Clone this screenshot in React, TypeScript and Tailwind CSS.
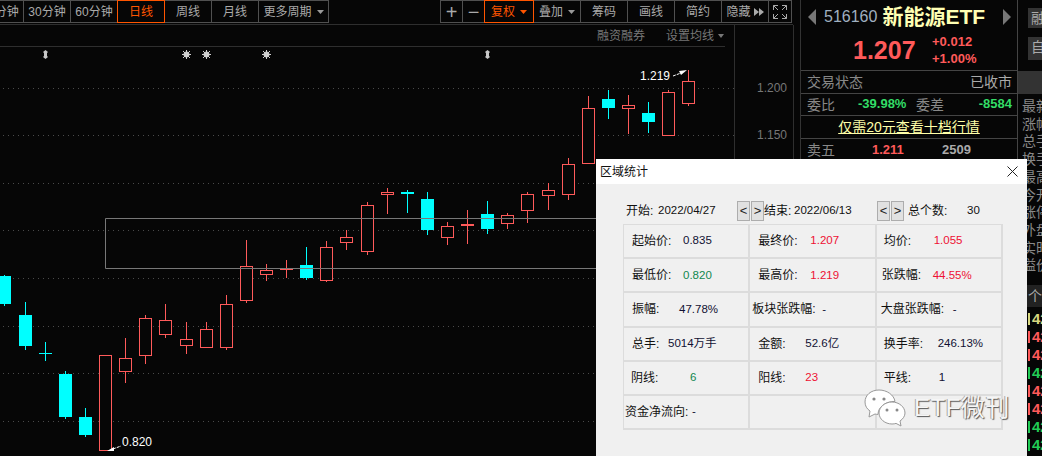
const RED = "#ff5a5a";
const CYAN = "#00ffff";

// x, body top, body bottom, wick top, wick bottom, kind (r hollow, c cyan, f red filled)
const candles: [number, number, number, number, number, string][] = [
  [4.5, 276, 304, 275, 306, "c"],
  [25.5, 315, 346, 302, 350, "c"],
  [45.5, 353, 354, 342, 361, "c"],
  [65.5, 374, 417, 371, 419, "c"],
  [85.5, 417, 435, 408, 437, "c"],
  [105.5, 355.5, 450.5, 355, 451, "r"],
  [125.5, 358.5, 371.5, 338, 383, "r"],
  [145.5, 318.5, 355.5, 315, 364, "r"],
  [165.5, 320.5, 334.5, 304, 338, "r"],
  [186.5, 339.5, 345.5, 322, 354, "r"],
  [206.5, 329.5, 347.5, 322, 348, "r"],
  [226.5, 304.5, 347.5, 295, 350, "r"],
  [246.5, 266.5, 300.5, 240, 303, "r"],
  [266.5, 270.5, 274.5, 264, 281, "r"],
  [286.5, 269, 270, 260, 278, "f"],
  [306.5, 265, 278, 247, 280, "c"],
  [326.5, 247.5, 280.5, 241, 282, "r"],
  [346.5, 237.5, 242.5, 230, 250, "r"],
  [367.5, 205.5, 251.5, 202, 255, "r"],
  [387.5, 192.5, 194.5, 188, 214, "r"],
  [407.5, 192, 194, 190, 213, "c"],
  [427.5, 199, 230, 192, 235, "c"],
  [447.5, 226.5, 237.5, 222, 245, "r"],
  [467.5, 224, 226, 210, 244, "f"],
  [487.5, 214, 229, 201, 234, "c"],
  [507.5, 215.5, 223.5, 213, 229, "r"],
  [527.5, 194.5, 210.5, 192, 223, "r"],
  [548.5, 190.5, 195.5, 183, 210, "r"],
  [568.5, 164.5, 194.5, 158, 200, "r"],
  [588.5, 108.5, 163.5, 96, 164, "r"],
  [608.5, 99, 108, 90, 119, "c"],
  [628.5, 105.5, 108.5, 95, 134, "r"],
  [648.5, 113, 122, 102, 133, "c"],
  [668.5, 92.5, 135.5, 90, 136, "r"],
  [688.5, 81.5, 103.5, 70, 106, "r"],
];

const gridLines = [88.5, 135.5, 183.5, 230.5, 278.5, 326.5, 373.5, 421.5];

function Caret({ color = "#9a9a9a" }: { color?: string }) {
  return (
    <svg width="7" height="4" viewBox="0 0 7 4" className="ml-[5px] shrink-0">
      <polygon points="0,0 7,0 3.5,4" fill={color} />
    </svg>
  );
}

function ToolButton({ w, text, active, caret, size = "text-xs", className = "" }: {
  w: string;
  text: string;
  active?: boolean;
  caret?: boolean;
  size?: string;
  className?: string;
}) {
  return (
    <div
      className={`${w} ${size} ${className} h-[23px] shrink-0 flex items-center justify-center border ${
        active ? "border-[#ff5500] text-[#ff5500] z-10" : "border-[#505050] text-[#aaaaaa]"
      } -mr-px`}
    >
      {text}
      {caret && <Caret color={active ? "#ff5500" : "#9a9a9a"} />}
    </div>
  );
}

function Toolbar() {
  return (
    <div className="h-[25px] flex justify-between border-b border-[#2e2e2e] overflow-hidden">
      <div className="flex">
        <ToolButton w="w-[48px] -ml-[24px]" text="15分钟" />
        <ToolButton w="w-[48px]" text="30分钟" />
        <ToolButton w="w-[48px]" text="60分钟" />
        <ToolButton w="w-[48px]" text="日线" active />
        <ToolButton w="w-[48px]" text="周线" />
        <ToolButton w="w-[48px]" text="月线" />
        <ToolButton w="w-[71px]" text="更多周期" caret />
      </div>
      <div className="flex mr-px">
        <ToolButton w="w-[23px]" text="+" size="text-[20px] font-light" />
        <ToolButton w="w-[23px]" text="−" size="text-[20px] font-light" />
        <ToolButton w="w-[50px]" text="复权" active caret />
        <ToolButton w="w-[48px]" text="叠加" caret />
        <ToolButton w="w-[48px]" text="筹码" />
        <ToolButton w="w-[48px]" text="画线" />
        <ToolButton w="w-[48px]" text="简约" />
        <div className="w-[48px] h-[23px] -mr-px shrink-0 flex items-center justify-center border border-[#505050] text-xs text-[#aaaaaa]">
          隐藏
          <svg width="10" height="8" viewBox="0 0 10 8" className="ml-[3px]">
            <polygon points="0,0 5,4 0,8" fill="#aaaaaa" />
            <polygon points="5,0 10,4 5,8" fill="#aaaaaa" />
          </svg>
        </div>
        <div className="w-[24px] h-[23px] shrink-0 flex items-center justify-center border border-[#505050]">
          <svg width="14" height="14" viewBox="0 0 14 14" fill="none" stroke="#aaaaaa" strokeWidth="1">
            <path d="M5 .5H.5V5M.5 .5L5 5M9 .5h4.500V5M13.500 .5L9 5M5 13.500H.5V9M.5 13.500L5 9M9 13.500h4.500V9M13.500 13.500L9 9" />
          </svg>
        </div>
      </div>
    </div>
  );
}

function Star({ x }: { x: number }) {
  return (
    <g stroke="#d0d0d0" strokeWidth="1">
      <circle cx={x} cy="54.5" r="2.6" fill="#d0d0d0" />
      <path d={`M${x - 4.5} 54.5h9M${x} 50v9M${x - 3.5} 51l7 7M${x + 3.5} 51l-7 7`} />
    </g>
  );
}

function UpDown({ x }: { x: number }) {
  return (
    <polygon
      points={`${x},50 ${x + 2.5},52 ${x + 1.5},53 ${x + 1.5},56 ${x + 2.5},57 ${x},59 ${x - 2.5},57 ${x - 1.5},56 ${x - 1.5},53 ${x - 2.5},52`}
      fill="#c8c8c8"
    />
  );
}

function Chart() {
  return (
    <svg width="793" height="409" viewBox="0 47 793 409" className="block">
      <line x1="734.5" y1="47" x2="734.5" y2="456" stroke="#2e2e2e" />
      {gridLines.map((y) => (
        <line key={y} x1="3" y1={y} x2="734" y2={y} stroke="#4a4a4a" strokeDasharray="1 4" />
      ))}
      <UpDown x={45.5} />
      <Star x={186.5} />
      <Star x={206.5} />
      <Star x={266.5} />
      <UpDown x={487.5} />
      {candles.map(([x, top, bottom, wickTop, wickBottom, kind]) => {
        const color = kind === "c" ? CYAN : RED;
        return (
          <g key={x}>
            <line x1={x} y1={wickTop} x2={x} y2={wickBottom} stroke={color} />
            {kind === "r" ? (
              <rect x={x - 6} y={top} width="12" height={bottom - top} fill="#060606" stroke={color} />
            ) : (
              <rect x={x - 6.5} y={top} width="13" height={bottom - top} fill={color} />
            )}
          </g>
        );
      })}
      <path d="M105.5 268.5V218.5H600M105.5 268.5H600" fill="none" stroke="#777777" />
      <text x="640" y="80" fill="#ffffff" fontSize="12">1.219</text>
      <path d="M673 76l8-3" stroke="#ffffff" strokeDasharray="3 1" />
      <polygon points="687,70 679,71 681,75" fill="#ffffff" />
      <text x="122" y="446" fill="#ffffff" fontSize="12">0.820</text>
      <path d="M113 449l8-3" stroke="#ffffff" strokeDasharray="3 1" />
      <polygon points="107,451 114,447 114,451" fill="#ffffff" />
      <text x="757" y="92" fill="#777777" fontSize="12">1.200</text>
      <text x="757" y="139" fill="#777777" fontSize="12">1.150</text>
    </svg>
  );
}

function QuotePanel() {
  return (
    <div className="w-[216px] shrink-0 flex flex-col">
      <div className="h-[71px] shrink-0 border-b border-[#444444]">
        <div className="h-[33px] flex items-center pl-[7px] pt-[1px]">
          <svg width="8" height="16" viewBox="0 0 8 16"><polygon points="8,0 0,8 8,16" fill="#777777" /></svg>
          <span className="ml-[8px] text-[16px] text-[#a0b0c0]">516160</span>
          <span className="ml-[5px] w-[121px] text-[21px] font-bold whitespace-nowrap text-[#ffffb4]">新能源ETF</span>
          <svg width="8" height="16" viewBox="0 0 8 16"><polygon points="0,0 8,8 0,16" fill="#777777" /></svg>
        </div>
        <div className="flex pl-[52px]">
          <span className="w-[63px] mt-[-1px] text-[25px] leading-[36px] font-bold text-[#ff5a5a]">1.207</span>
          <div className="ml-[16px] flex flex-col text-[13px] leading-[17px] font-bold text-[#ff5a5a]">
            <span>+0.012</span>
            <span>+1.00%</span>
          </div>
        </div>
      </div>
      <div className="h-[23px] shrink-0 flex items-center justify-between px-[6px] pr-[5px] border-b border-[#444444] text-sm text-[#888888]">
        <span>交易状态</span>
        <span className="text-[#aaaaaa]">已收市</span>
      </div>
      <div className="h-[22px] shrink-0 flex items-center pl-[6px] pr-[5px] border-b border-[#444444] text-sm text-[#888888]">
        <span>委比</span>
        <span className="ml-[23px] w-[58px] text-[13px] font-bold text-[#33dd66]">-39.98%</span>
        <span>委差</span>
        <span className="ml-auto text-[13px] font-bold text-[#33dd66]">-8584</span>
      </div>
      <div className="h-[23px] shrink-0 flex items-center justify-center border-b border-[#444444] text-sm text-[#ffffa8] underline">
        仅需20元查看十档行情
      </div>
      <div className="h-[22px] shrink-0 flex items-center pl-[6px] text-sm text-[#888888]">
        <span>卖五</span>
        <span className="ml-[37px] w-[70px] text-[13px] font-bold text-[#ff5a5a]">1.211</span>
        <span className="text-[13px] font-bold text-[#aaaaaa]">2509</span>
      </div>
    </div>
  );
}

const sideLabels = ["最新", "涨幅", "总手", "换手", "最高", "今开", "涨停", "外盘", "实时", "溢价"];
const sideBars = ["#d8d880", "#ff5a5a", "#ff5a5a", "#22cc55", "#ff5a5a", "#ff5a5a", "#22cc55", "#22cc55"];

function SidePanel() {
  return (
    <div className="w-[26px] shrink-0 overflow-hidden border-l border-[#444444] flex flex-col">
      <div className="h-[71px] shrink-0 pl-[10px] pt-[8px] flex flex-col gap-[9px] text-sm text-[#aaaaaa]">
        <div className="h-[20px] w-[40px] bg-[#333333] whitespace-nowrap pl-[3px]">融资</div>
        <div className="h-[23px] w-[40px] bg-[#333333] whitespace-nowrap pl-[3px]">自选</div>
      </div>
      <div className="h-[23px] shrink-0 bg-[#333333]" />
      <div className="shrink-0 pt-[4px] pl-[4px] flex flex-col text-sm leading-[17.7px] text-[#888888] whitespace-nowrap">
        {sideLabels.map((t) => (
          <span key={t}>{t}</span>
        ))}
      </div>
      <div className="h-[22px] mt-[10px] shrink-0 bg-[#222222] pl-[10px] text-sm leading-[22px] text-[#aaaaaa] whitespace-nowrap">个股</div>
      <div className="pt-[3px] flex flex-col">
        {sideBars.map((c, i) => (
          <div key={i} className="h-[18px] flex items-center pl-[10px] text-[15px] font-bold" style={{ color: c }}>
            <span className="w-[2px] h-[12px] mr-[2px] shrink-0" style={{ background: c }} />
            <span className="whitespace-nowrap">42.1</span>
          </div>
        ))}
      </div>
    </div>
  );
}

type Cell = { label?: string; value?: string; color?: string; pad?: string; lw?: string };

const cells: Cell[] = [
  { label: "起始价:", value: "0.835", pad: "pl-[8px]", lw: "w-[51px]" },
  { label: "最终价:", value: "1.207", color: "text-[#ee1133]", pad: "pl-[8px]", lw: "w-[52px]" },
  { label: "均价:", value: "1.055", color: "text-[#ee1133]", pad: "pl-[7px]", lw: "w-[50px]" },
  { label: "最低价:", value: "0.820", color: "text-[#11884f]", pad: "pl-[8px]", lw: "w-[51px]" },
  { label: "最高价:", value: "1.219", color: "text-[#ee1133]", pad: "pl-[8px]", lw: "w-[52px]" },
  { label: "张跌幅:", value: "44.55%", color: "text-[#ee1133]", pad: "pl-[5px]", lw: "w-[51px]" },
  { label: "振幅:", value: "47.78%", pad: "pl-[8px]", lw: "w-[47px]" },
  { label: "板块张跌幅:", value: "-", pad: "pl-[2px]", lw: "w-[70px]" },
  { label: "大盘张跌幅:", value: "-", pad: "pl-[4px]", lw: "w-[72px]" },
  { label: "总手:", value: "5014万手", pad: "pl-[8px]", lw: "w-[36px]" },
  { label: "金额:", value: "52.6亿", pad: "pl-[8px]", lw: "w-[47px]" },
  { label: "换手率:", value: "246.13%", pad: "pl-[7px]", lw: "w-[54px]" },
  { label: "阴线:", value: "6", color: "text-[#11884f]", pad: "pl-[7px]", lw: "w-[59px]" },
  { label: "阳线:", value: "23", color: "text-[#ee1133]", pad: "pl-[8px]", lw: "w-[47px]" },
  { label: "平线:", value: "1", pad: "pl-[7px]", lw: "w-[55px]" },
  { label: "资金净流向:", value: "-", pad: "pl-px", lw: "w-[67px]" },
  {},
  {},
];

function NavButton({ text }: { text: string }) {
  return (
    <div className="w-[13px] h-[20px] flex items-center justify-center bg-[#e1e1e1] border border-[#adadad] text-[13px] text-[#222222]">
      {text}
    </div>
  );
}

function StatsDialog() {
  return (
    <div className="absolute left-[596px] top-[159px] w-[431px] h-[297px] bg-[#f0f0f0] text-xs text-[#111111]">
      <div className="h-[25px] bg-white flex items-center justify-between pl-[4px] pr-[9px]">
        <span>区域统计</span>
        <svg width="11" height="11" viewBox="0 0 11 11" stroke="#222222" strokeWidth="1">
          <path d="M.5 .5l10 10M10.5 .5l-10 10" />
        </svg>
      </div>
      <div className="h-[40px] pl-[30px] pt-[17px] flex items-start">
        <div className="w-[111px] flex h-[20px] items-center">
          <span className="w-[32px]">开始:</span>
          <span className="text-[11.5px]">2022/04/27</span>
        </div>
        <div className="flex gap-px"><NavButton text="<" /><NavButton text=">" /></div>
        <div className="w-[113px] flex h-[20px] items-center">
          <span className="w-[30px]">结束:</span>
          <span className="text-[11.5px]">2022/06/13</span>
        </div>
        <div className="flex gap-px"><NavButton text="<" /><NavButton text=">" /></div>
        <div className="ml-[4px] flex h-[20px] items-center">
          <span className="w-[59px]">总个数:</span>
          <span className="text-[11.5px]">30</span>
        </div>
      </div>
      <div className="ml-[27px] w-[380px] grid grid-cols-3 border-t border-l border-[#dcdcdc]">
        {cells.map((c, i) => (
          <div key={i} className={`h-[34.2px] flex items-center border-r-2 border-b-2 border-[#dcdcdc] ${c.pad ?? ""}`}>
            {c.label && <span className={`${c.lw} shrink-0`}>{c.label}</span>}
            {c.value && <span className={`text-[11.5px] ${c.color ?? "text-[#111133]"}`}>{c.value}</span>}
          </div>
        ))}
      </div>
    </div>
  );
}

function Watermark() {
  return (
    <div className="absolute left-[864px] top-[389px] flex items-center">
      <svg width="42" height="38" viewBox="0 0 42 38">
        <path d="M15 1C7 1 1 6 1 13c0 4 2 7 5 9l-1 6 6-3c1 .3 2 .4 3 .4 0-7 7-13 17-13C30 6 23 1 15 1z" fill="#ffffff" stroke="#999999" />
        <circle cx="10" cy="10" r="1.6" fill="#888888" />
        <circle cx="20" cy="10" r="1.6" fill="#888888" />
        <path d="M28 13c-7 0-13 5-13 11s6 11 13 11c1.500 0 3-.2 4-.6l5 2.600-1-5c3-2 5-5 5-8 0-6-6-11-13-11z" fill="#ffffff" stroke="#999999" />
        <circle cx="23" cy="21" r="1.5" fill="#888888" />
        <circle cx="33" cy="21" r="1.5" fill="#888888" />
      </svg>
      <span className="ml-[8px] text-[24px] leading-none tracking-[0.5px] text-[#f6f6f6] [text-shadow:1px_1px_1px_#555555,-1px_0_0_#aaaaaa]">
        ETF微刊
      </span>
    </div>
  );
}

export default function App() {
  return (
    <div className="relative w-[1042px] h-[456px] overflow-hidden flex bg-[#060606] [font-family:'Liberation_Sans','Noto_Sans_CJK_SC',sans-serif]">
      <div className="w-[793px] shrink-0 flex flex-col">
        <Toolbar />
        <div className="h-[22px] w-[735px] shrink-0 border-r border-[#2e2e2e]">
          <div className="h-full w-[725px] border-b border-[#2e2e2e] flex items-center justify-end text-xs text-[#777777]">
            <span>融资融券</span>
            <span className="ml-[21px]">设置均线</span>
            <svg width="6" height="4" viewBox="0 0 6 4" className="ml-[4px] mr-px shrink-0">
              <polygon points="0,0 6,0 3,4" fill="#777777" />
            </svg>
          </div>
        </div>
        <Chart />
      </div>
      <div className="w-[7px] shrink-0 mt-[25px] border-l border-[#2e2e2e]" />
      <div className="w-[242px] shrink-0 flex border-l border-[#333333]">
        <QuotePanel />
        <SidePanel />
      </div>
      <StatsDialog />
      <Watermark />
    </div>
  );
}
